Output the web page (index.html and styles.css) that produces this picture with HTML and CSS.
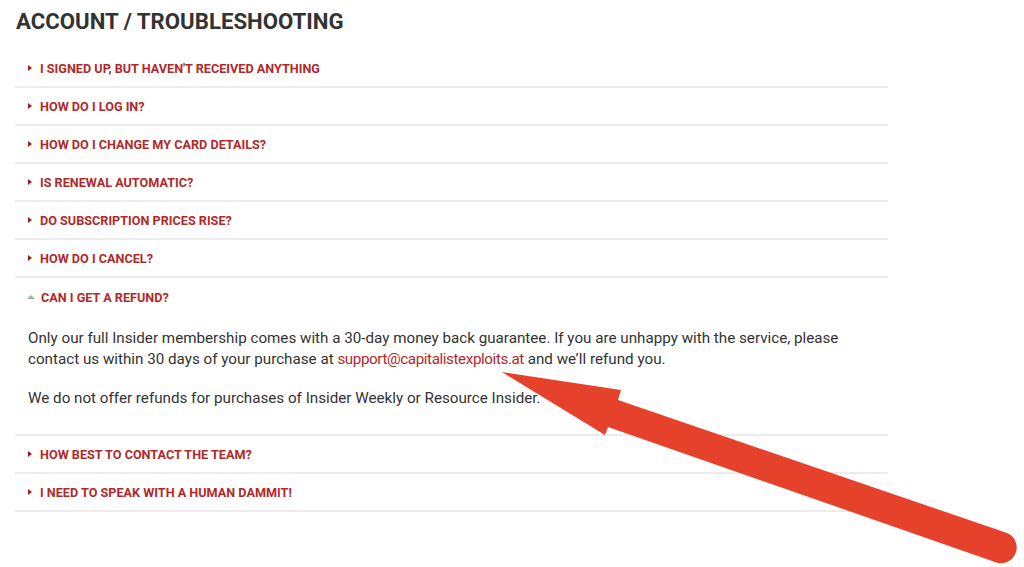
FILE: index.html
```html
<!DOCTYPE html>
<html lang="en">
<head>
    <meta charset="UTF-8">
    <meta name="viewport" content="width=device-width, initial-scale=1.0">
    <title>Account / Troubleshooting</title>
    <link rel="stylesheet" href="styles.css">
</head>
<body>
    <div class="page">
        <h1>Account / Troubleshooting</h1>

        <div class="faq">
            <div class="faq-item"><div class="faq-q"><span class="caret"></span>I signed up, but haven't received anything</div></div>
            <div class="faq-item"><div class="faq-q"><span class="caret"></span>How do I log in?</div></div>
            <div class="faq-item"><div class="faq-q"><span class="caret"></span>How do I change my card details?</div></div>
            <div class="faq-item"><div class="faq-q"><span class="caret"></span>Is renewal automatic?</div></div>
            <div class="faq-item"><div class="faq-q"><span class="caret"></span>Do subscription prices rise?</div></div>
            <div class="faq-item"><div class="faq-q"><span class="caret"></span>How do I cancel?</div></div>
            <div class="faq-item open">
                <div class="faq-q"><span class="caret"></span>Can I get a refund?</div>
                <div class="faq-a">
                    <p>Only our full Insider membership comes with a 30-day money back guarantee. If you are unhappy with the service, please contact us within 30 days of your purchase at <a href="mailto:support@capitalistexploits.at">support@capitalistexploits.at</a> and we’ll refund you.</p>
                    <p>We do not offer refunds for purchases of Insider Weekly or Resource Insider.</p>
                </div>
            </div>
            <div class="faq-item"><div class="faq-q"><span class="caret"></span>How best to contact the team?</div></div>
            <div class="faq-item"><div class="faq-q"><span class="caret"></span>I need to speak with a human dammit!</div></div>
        </div>

        <!-- annotation arrow drawn over the page -->
        <svg class="arrow" width="1024" height="567" viewBox="0 0 1024 567">
            <path d="M502 372 L621 390 L618 400 L1007 533 A15 15 0 0 1 995 562 L608 427 L605 435 Z" fill="#e6412a"/>
        </svg>
    </div>
</body>
</html>
```

FILE: styles.css
```css
body {
    margin: 0;
    background: #fff;
    font-family: Roboto, 'Liberation Sans', Arial, sans-serif;
    color: #333;
}
.page {
    position: relative;
    width: 1024px;
    height: 567px;
    overflow: hidden;
}
h1 {
    margin: 8px 0 16px 16px;
    font-size: 22.2px;
    line-height: 26px;
    font-weight: 700;
    text-transform: uppercase;
    color: #333;
}
.faq {
    margin-left: 15px;
    width: 873px;
}
.faq-item {
    border-bottom: 2px solid #ececec;
}
.faq-q {
    display: flex;
    align-items: center;
    height: 36px;
    padding-left: 13px;
    font-size: 12.65px;
    font-weight: 700;
    text-transform: uppercase;
    color: #b02a2a;
}
.caret {
    width: 0;
    height: 0;
    margin-right: 8px;
    border-top: 3.5px solid transparent;
    border-bottom: 3.5px solid transparent;
    border-left: 4px solid #9e1f1f;
}
.open .faq-q {
    height: 38px;
}
.open .caret {
    margin-left: -1px;
    margin-right: 6px;
    border-left: 4px solid transparent;
    border-right: 4px solid transparent;
    border-top: 0;
    border-bottom: 4px solid #8cc08c;
}
.faq-a {
    padding: 12px 13px 25px;
    font-size: 15.2px;
    line-height: 21px;
    color: #333;
}
.faq-a p {
    margin: 0 0 18px;
}
.faq-a p:last-child {
    margin-bottom: 0;
}
.faq-a a {
    color: #b02a2a;
    letter-spacing: -0.4px;
    text-decoration: none;
}
.arrow {
    position: absolute;
    left: 0;
    top: 0;
}
```
